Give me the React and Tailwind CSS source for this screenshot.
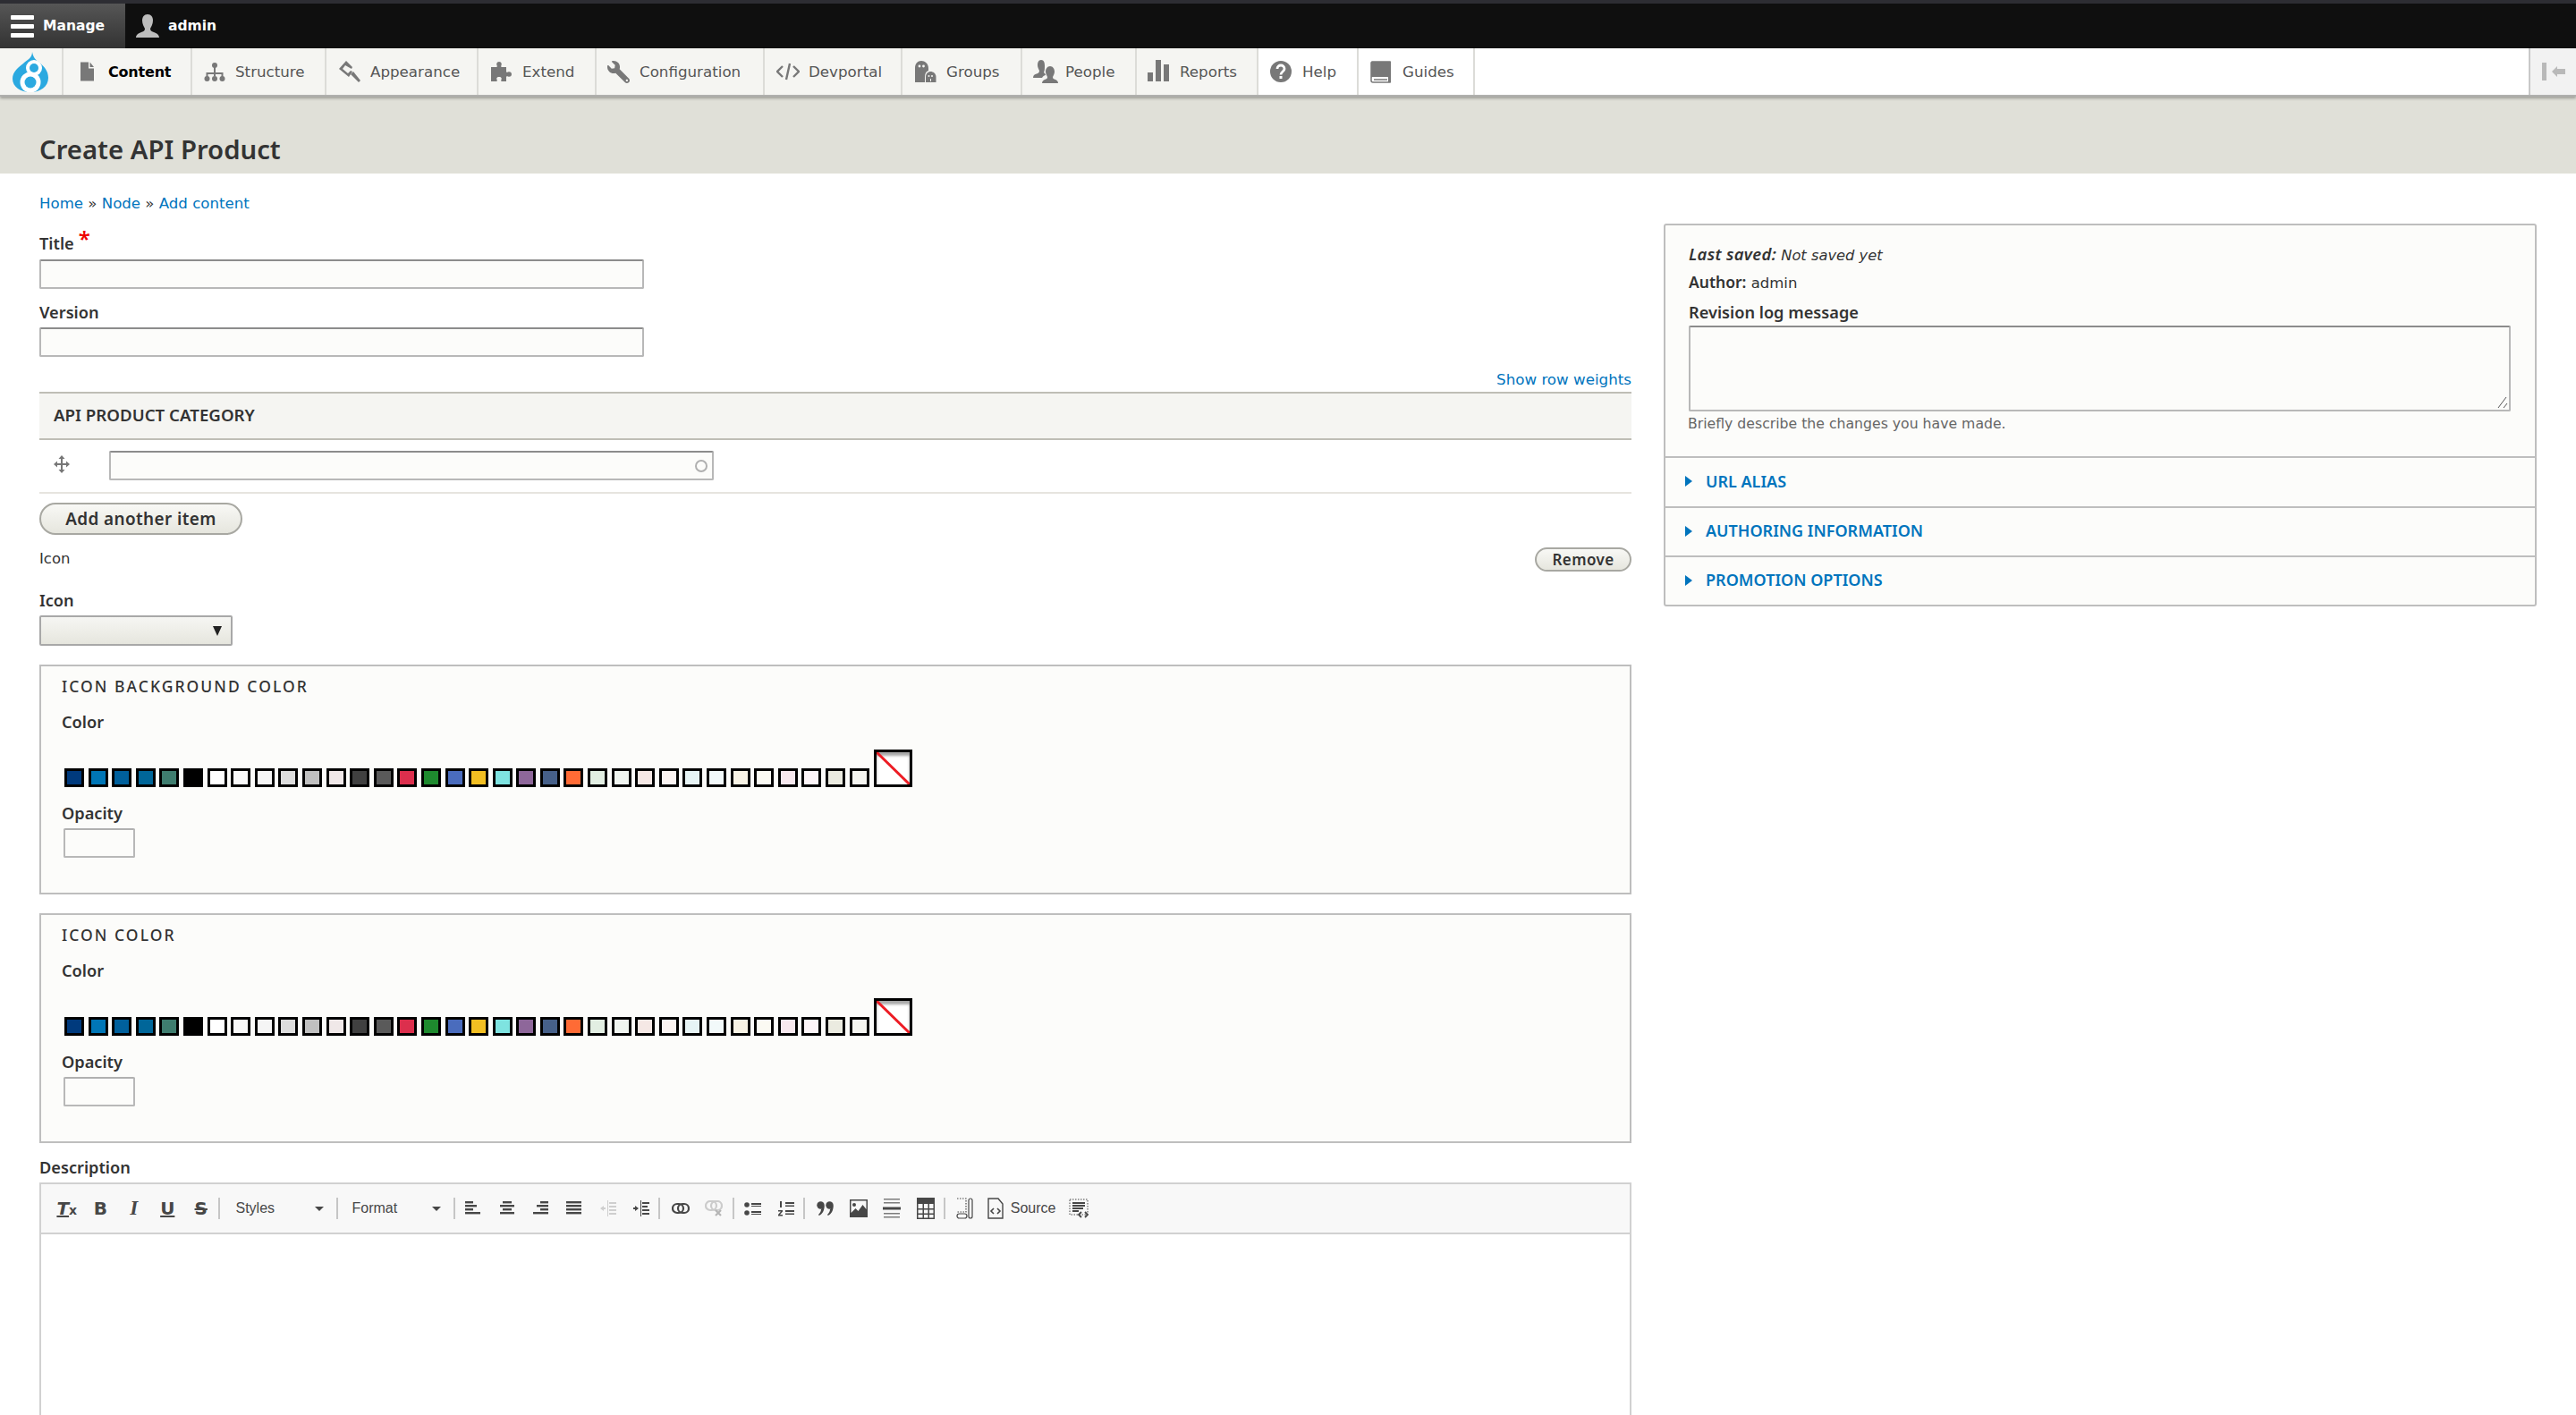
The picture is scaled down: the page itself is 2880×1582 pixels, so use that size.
import { FaWrench } from "react-icons/fa";

const navGrey = "#787878";

const swatches = [
    "#003a7d", "#0076b6", "#00609c", "#006699", "#3f7d6f", "#000000", "#ffffff", "#f9f9f9", "#f5f5f5", "#dcdcdc", "#c0c0c0", "#f0e8e8",
    "#404040", "#5a5a5a", "#dc2f4d", "#1e8a2e", "#4a6cbd", "#f2bf22", "#7ee3e0", "#8e679a", "#466089", "#ff6b35", "#e2eee2", "#f0f5f0",
    "#f5e8e5", "#fbf4f2", "#e7f4f5", "#f2f9fa", "#f8f3e5", "#fbfaf3", "#f7e8ee", "#fdf5f8", "#ebebe0", "#f5f5f0",
];

const FileIcon = () => (
    <svg width="24" height="24" viewBox="0 0 24 24" fill={navGrey}>
        <path d="M5 1.5h9v7h6v14H5z" />
        <path d="M15.500 1.500l4.500 5.500h-4.500z" />
    </svg>
);

const StructureIcon = () => (
    <svg width="26" height="26" viewBox="0 0 26 26" fill={navGrey} stroke={navGrey}>
        <circle cx="13" cy="6" r="3" stroke="none" />
        <path d="M13 8v10M4.500 20v-5h17v5" strokeWidth="2" fill="none" />
        <circle cx="4.500" cy="21" r="3" stroke="none" />
        <circle cx="13" cy="21" r="3" stroke="none" />
        <circle cx="21.500" cy="21" r="3" stroke="none" />
    </svg>
);

const AppearanceIcon = () => (
    <svg width="26" height="26" viewBox="0 0 26 26" fill={navGrey}>
        <path d="M9 1l7 7-1 2-7-4-3 4 6 5 3-3 2 1-4 6L1 10z" />
        <path d="M14 16l3-3 8 10-2 2z" />
    </svg>
);

const ExtendIcon = () => (
    <svg width="26" height="26" viewBox="0 0 26 26" fill={navGrey}>
        <path d="M1 8h6c1 0 1-1 .5-2S7 2 10 2s3 3 2.500 4-.5 2 .5 2h5v5c0 1 1 1 2 .5s4-.5 4 2.500-3 3-4 2.500-2-.5-2 .5v5h-5c-1 0-1-1-.5-2s.5-3-2.500-3-3 2-2.500 3 .5 2-.5 2H1z" />
    </svg>
);

const DevIcon = () => (
    <svg width="26" height="26" viewBox="0 0 26 26" fill="none" stroke={navGrey} strokeWidth="2.400">
        <path d="M7 7l-6 6 6 6M19 7l6 6-6 6M15 4l-4 18" />
    </svg>
);

const GroupsIcon = () => (
    <svg width="26" height="26" viewBox="0 0 26 26" fill={navGrey}>
        <path d="M1 25V9C1 4 4 1 8 1s8 3 8 8v3c-3 1-4 4-4 7v6z" />
        <path d="M13 25v-6c0-4 3-6 5.500-6s6 2 6 6v6z" />
        <circle cx="6" cy="7" r="1.400" fill="#f5f5f2" />
        <circle cx="10.500" cy="7" r="1.400" fill="#f5f5f2" />
        <circle cx="16.500" cy="18" r="1" fill="#f5f5f2" />
        <circle cx="20" cy="18" r="1" fill="#f5f5f2" />
        <rect x="18" y="21" width="1" height="3" fill="#f5f5f2" />
    </svg>
);

const PeopleIcon = () => (
    <svg width="28" height="28" viewBox="0 0 28 28" fill={navGrey}>
        <path d="M9 1c-3 0-4 3-4 6 0 2 1 4 2 6 0 2-1 3-3 3.500S0 18 0 21h10c1-2 3-3 4-3 0-1-1-2-2-3 1-2 1-5 1-8s-1-6-4-6z" />
        <path d="M19 8c-3 0-5 3-5 6 0 2 1 4 2 6 0 2-1 2-3 3s-3 2-3 4h18c0-2-1-3-3-4s-3-1-3-3c1-2 2-4 2-6 0-3-2-6-5-6z" />
    </svg>
);

const ReportsIcon = () => (
    <svg width="26" height="26" viewBox="0 0 26 26" fill={navGrey}>
        <rect x="0" y="14" width="6" height="10" />
        <rect x="9" y="0" width="6" height="24" />
        <rect x="18" y="5" width="6" height="19" />
    </svg>
);

const HelpIcon = () => (
    <svg width="24" height="24" viewBox="0 0 24 24">
        <circle cx="12" cy="12" r="12" fill={navGrey} />
        <path d="M8 9c0-2.500 2-4 4-4s4 1.500 4 4c0 3-4 3-4 6.500" fill="none" stroke="#ffffff" strokeWidth="2.800" />
        <rect x="10.500" y="17" width="3" height="3" fill="#ffffff" />
    </svg>
);

const BookIcon = () => (
    <svg width="24" height="26" viewBox="0 0 24 26">
        <path d="M2 2h20v23H3c-1 0-2-1-2-2V3z" fill="none" stroke={navGrey} strokeWidth="1.500" />
        <path d="M1 2h21v17H3c-1 0-2 .5-2 1z" fill={navGrey} />
        <rect x="20" y="2" width="3" height="23" fill={navGrey} />
        <path d="M4 22h15" stroke={navGrey} strokeWidth="1.500" />
    </svg>
);

const navItems = [
    { label: "Content", width: 144, icon: <FileIcon />, active: true, pad: 14 },
    { label: "Structure", width: 150, icon: <StructureIcon />, pad: 12 },
    { label: "Appearance", width: 170, icon: <AppearanceIcon />, pad: 13 },
    { label: "Extend", width: 132, icon: <ExtendIcon />, pad: 13 },
    { label: "Configuration", width: 188, icon: <FaWrench size={25} color={navGrey} className="-scale-x-100" />, pad: 12 },
    { label: "Devportal", width: 154, icon: <DevIcon />, pad: 13 },
    { label: "Groups", width: 134, icon: <GroupsIcon />, pad: 13 },
    { label: "People", width: 128, icon: <PeopleIcon />, pad: 12 },
    { label: "Reports", width: 136, icon: <ReportsIcon />, pad: 12 },
    { label: "Help", width: 112, icon: <HelpIcon />, pad: 13, white: true },
    { label: "Guides", width: 130, icon: <BookIcon />, pad: 13, white: true },
];

const Toolbar = () => (
    <div className="bg-[#0f0f0f] border-t-4 border-[#2d2d33] h-[54px] flex">
        <div className="w-[140px] h-full bg-gradient-to-b from-[#565656] to-[#333333] flex items-center pl-3 gap-2.5">
            <div className="flex flex-col gap-[5px]">
                <div className="w-[26px] h-[5px] bg-white rounded-[1px]" />
                <div className="w-[26px] h-[5px] bg-white rounded-[1px]" />
                <div className="w-[26px] h-[5px] bg-white rounded-[1px]" />
            </div>
            <span className="text-white font-bold text-[15.500px] mt-[2px]">Manage</span>
        </div>
        <div className="flex items-center pl-3 gap-2.5">
            <svg width="26" height="26" viewBox="0 0 26 26" fill="#bdbdbd">
                <path d="M13 0c-4 0-6 3-6 7 0 4 2 7 3 9 0 2-1 3-4 4-3 1-6 3-6 6h26c0-3-3-5-6-6-3-1-4-2-4-4 1-2 3-5 3-9 0-4-2-7-6-7z" />
            </svg>
            <span className="text-white font-bold text-[15.500px] mt-[2px]">admin</span>
        </div>
    </div>
);

const AdminNav = () => (
    <div className="relative z-10 h-[54px] flex bg-white border-b-2 border-[#b0b0ae] shadow-[0_2px_3px_rgba(0,0,0,0.3)]">
        <div className="w-[71px] bg-[#f5f5f2] border-r-2 border-[#dcdcd8] flex items-center pl-3.5">
            <svg width="40" height="45" viewBox="0 0 40 45">
                <path d="M22 0c0 7-6 9-10 13C7 17 0 22 0 30c0 9 9 15 20 15s20-6 20-16c0-8-5-13-10-17C26 9 23 6 22 0z" fill="#2ba9e0" />
                <circle cx="20" cy="34" r="11.500" fill="#ffffff" />
                <circle cx="24" cy="18" r="9" fill="#ffffff" />
                <circle cx="20" cy="34" r="6.500" fill="#2ba9e0" />
                <circle cx="24" cy="18" r="5" fill="#2ba9e0" />
            </svg>
        </div>
        {navItems.map((item) => (
            <div
                key={item.label}
                style={{ width: item.width, paddingLeft: item.pad }}
                className={`border-r-2 border-[#dcdcd8] flex items-center ${item.white ? "bg-white" : "bg-[#f5f5f2]"}`}
            >
                <div className="w-[36px] shrink-0 flex items-center">{item.icon}</div>
                {item.active ? (
                    <span className="font-bold text-black text-[16px] tracking-[-0.2px] mt-[1px]">{item.label}</span>
                ) : (
                    <span className="text-[#565656] text-[16.700px] mt-[1px]">{item.label}</span>
                )}
            </div>
        ))}
        <div className="flex-1" />
        <div className="w-[53px] bg-[#f2f2f2] border-l-2 border-[#c8c8c8] flex items-center pl-[13px] gap-[6px]">
            <div className="w-[5px] h-[20px] bg-[#b9b9b9]" />
            <svg width="15" height="12" viewBox="0 0 15 12" fill="#b9b9b9">
                <path d="M0 6l6-6v3h9v6H6v3z" />
            </svg>
        </div>
    </div>
);

const Label = ({ children, className = "" }) => (
    <div className={`h-[24px] leading-[23px] font-['Noto_Sans',sans-serif] font-semibold text-[18.200px] text-[#333333] ${className}`}>
        {children}
    </div>
);

const inputCls = "block h-[33px] bg-[#fcfcfa] border-2 border-[#b8b8b8] border-t-[#8c8c8c] rounded-[2px] outline-none";

const ColorField = ({ title, className = "" }) => (
    <div className={`h-[257px] bg-[#fcfcfa] border-2 border-[#bebebe] pl-[23px] pt-[10px] ${className}`}>
        <div className="h-[24px] leading-[24px] font-['Noto_Sans',sans-serif] font-medium text-[17.500px] tracking-[2.050px] text-[#333333] uppercase">
            {title}
        </div>
        <Label className="mt-[17px]">Color</Label>
        <div className="mt-[18px] ml-[3px] h-[42px] flex items-end">
            {swatches.map((c, i) => (
                <div key={i} style={{ backgroundColor: c }} className="w-[22px] h-[21px] mr-[4.600px] border-[3px] border-black" />
            ))}
            <div className="ml-[1px] w-[43px] h-[42px] border-[3px] border-black bg-white shadow-[inset_0_4px_3px_rgba(0,0,0,0.35)]">
                <svg width="37" height="36" viewBox="0 0 37 36">
                    <line x1="0" y1="0" x2="37" y2="36" stroke="#ed1c24" strokeWidth="3" />
                </svg>
            </div>
        </div>
        <Label className="mt-[18px]">Opacity</Label>
        <input className={`${inputCls} mt-[4px] ml-[2px] w-[80px] !border-t-[#b0b0b0]`} />
    </div>
);

const Bars = ({ rows }) => (
    <svg width="20" height="20" viewBox="0 0 20 20" fill="#474747">
        {rows.map((r, i) => (
            <rect key={i} x={r[0]} y={2 + i * 4} width={r[1]} height="2.400" />
        ))}
    </svg>
);

const Glyph = ({ className = "", children }) => (
    <span className={`font-bold text-[20px] text-[#474747] ${className}`}>{children}</span>
);

const Btn = ({ children, w = 37.4 }) => (
    <div style={{ width: w }} className="h-[36px] flex items-center justify-center shrink-0">
        {children}
    </div>
);

const Sep = () => <div className="w-[2px] h-[24px] bg-[#c6c6c6] shrink-0" />;

const Combo = ({ label, width, pad }) => (
    <div style={{ width, paddingLeft: pad }} className="h-[36px] flex items-center justify-between pr-[14px] shrink-0 font-['Liberation_Sans',sans-serif] text-[16px] text-[#474747]">
        <span>{label}</span>
        <svg width="10" height="5" viewBox="0 0 10 5" fill="#474747">
            <path d="M0 0h10L5 5z" />
        </svg>
    </div>
);

const EditorToolbar = () => (
    <div className="h-[56px] bg-[#f8f8f8] border-b-2 border-[#d1d1d1] flex items-center pl-[10px]">
        <Btn w={37.5}>
            <span className="font-bold italic text-[20px] text-[#474747] underline leading-none">T</span>
            <span className="text-[14px] font-bold text-[#474747] self-end mb-[5px]">x</span>
        </Btn>
        <Btn w={37.5}><Glyph>B</Glyph></Btn>
        <Btn w={37.5}><Glyph className="italic font-['Liberation_Serif',serif] !text-[23px]">I</Glyph></Btn>
        <Btn w={37.5}><Glyph className="underline">U</Glyph></Btn>
        <Btn w={37.5}><Glyph className="line-through">S</Glyph></Btn>
        <Sep />
        <Combo label="Styles" width={130} pad={18} />
        <Sep />
        <Combo label="Format" width={129} pad={16} />
        <Sep />
        <div className="w-[3px]" />
        <Btn><Bars rows={[[0, 9], [0, 13], [0, 9], [0, 17]]} /></Btn>
        <Btn><Bars rows={[[4, 10], [1, 16], [4, 10], [1, 16]]} /></Btn>
        <Btn><Bars rows={[[9, 9], [5, 13], [9, 9], [1, 17]]} /></Btn>
        <Btn><Bars rows={[[1, 17], [1, 17], [1, 17], [1, 17]]} /></Btn>
        <Btn>
            <svg width="20" height="20" viewBox="0 0 20 20" fill="#cfcfcf">
                <path d="M1 10l4-3v2h2v2H5v2z" />
                <rect x="9" y="1" width="1" height="18" />
                <rect x="11" y="3" width="8" height="2" /><rect x="11" y="7" width="8" height="2" />
                <rect x="11" y="11" width="8" height="2" /><rect x="11" y="15" width="8" height="2" />
            </svg>
        </Btn>
        <Btn>
            <svg width="20" height="20" viewBox="0 0 20 20" fill="#474747">
                <path d="M7 10l-4-3v2H1v2h2v2z" />
                <rect x="9" y="1" width="1" height="18" />
                <rect x="11" y="3" width="8" height="2" /><rect x="11" y="7" width="6" height="2" />
                <rect x="11" y="11" width="8" height="2" /><rect x="11" y="15" width="8" height="2" />
            </svg>
        </Btn>
        <Sep />
        <div className="w-[5px]" />
        <Btn w={37}>
            <svg width="20" height="14" viewBox="0 0 20 14" fill="none" stroke="#474747" strokeWidth="2.200">
                <rect x="1" y="2" width="12" height="10" rx="5" />
                <rect x="7" y="2" width="12" height="10" rx="5" />
            </svg>
        </Btn>
        <Btn w={37}>
            <svg width="20" height="18" viewBox="0 0 20 18" fill="none" stroke="#cccccc" strokeWidth="2.200">
                <rect x="1" y="1" width="12" height="10" rx="5" />
                <rect x="7" y="1" width="12" height="10" rx="5" />
                <path d="M12 11l6 6M18 11l-6 6" stroke="#b5b5b5" />
            </svg>
        </Btn>
        <div className="w-[2px]" />
        <Sep />
        <div className="w-[3px]" />
        <Btn w={37}>
            <svg width="20" height="20" viewBox="0 0 20 20" fill="#474747">
                <circle cx="3" cy="6" r="2.800" /><circle cx="3" cy="15" r="2.800" />
                <rect x="8" y="4" width="11" height="2" /><rect x="8" y="7" width="11" height="1" />
                <rect x="8" y="13" width="11" height="2" /><rect x="8" y="16" width="11" height="1" />
            </svg>
        </Btn>
        <Btn w={37}>
            <svg width="20" height="20" viewBox="0 0 20 20" fill="#474747">
                <rect x="3" y="2" width="2" height="7" />
                <path d="M1 12h5v1.500L3 17h3v1.500H1V17l3-3.500H1z" />
                <rect x="9" y="3" width="10" height="2" /><rect x="9" y="6.500" width="10" height="1.500" />
                <rect x="9" y="12" width="10" height="2" /><rect x="9" y="15.500" width="10" height="1.500" />
            </svg>
        </Btn>
        <Sep />
        <div className="w-[4px]" />
        <Btn>
            <svg width="20" height="20" viewBox="0 0 20 20" fill="#474747">
                <circle cx="4.500" cy="6.500" r="4.200" /><path d="M8.700 7c0 5-2 9-6 11l-.7-1c2-2 3-4 3-6z" />
                <circle cx="14.500" cy="6.500" r="4.200" /><path d="M18.700 7c0 5-2 9-6 11l-.7-1c2-2 3-4 3-6z" />
            </svg>
        </Btn>
        <Btn>
            <svg width="20" height="20" viewBox="0 0 20 20" fill="#474747">
                <path d="M0 0h20v20H0zM1.500 1.500v13.500l5-5 3 3 5-7 4 5V1.500z" fillRule="evenodd" />
                <circle cx="5" cy="6" r="2" />
            </svg>
        </Btn>
        <Btn>
            <svg width="20" height="24" viewBox="0 0 20 24" fill="#474747">
                <rect x="1" y="1" width="18" height="1.500" opacity="0.7" /><rect x="1" y="5" width="18" height="1.500" opacity="0.7" />
                <rect x="0" y="10.500" width="20" height="3" />
                <rect x="1" y="17" width="18" height="1.500" opacity="0.7" /><rect x="1" y="21" width="18" height="1.500" opacity="0.7" />
            </svg>
        </Btn>
        <Btn>
            <svg width="20" height="24" viewBox="0 0 20 24" fill="#474747">
                <path d="M0 0h20v24H0zM1.500 7v5h5V7zM8 7v5h4.500V7zM14 7v5h4.500V7zM1.500 13.500v4h5v-4zM8 13.500v4h4.500v-4zM14 13.500v4h4.500v-4zM1.500 19v3.500h5V19zM8 19v3.500h4.500V19zM14 19v3.500h4.500V19z" fillRule="evenodd" />
            </svg>
        </Btn>
        <div className="w-[2px]" />
        <Sep />
        <div className="w-[3px]" />
        <Btn>
            <svg width="20" height="24" viewBox="0 0 20 24" fill="none" stroke="#474747" strokeWidth="1.200">
                <path d="M1 1h10v15H1" strokeDasharray="1.500 1.500" />
                <rect x="14" y="1" width="4" height="22" rx="2" />
                <rect x="1" y="18" width="11" height="5" rx="2.500" />
            </svg>
        </Btn>
        <div className="w-[6px]" />
        <svg width="18" height="24" viewBox="0 0 18 24" fill="none" stroke="#474747" strokeWidth="1.400" className="shrink-0">
            <path d="M1 1h11l5 6v16H1z" />
            <path d="M7 12l-3 3 3 3M11 12l3 3-3 3" strokeWidth="1.600" />
        </svg>
        <span className="ml-[8px] mr-[7px] font-['Liberation_Sans',sans-serif] text-[16px] text-[#474747]">Source</span>
        <Btn>
            <svg width="22" height="22" viewBox="0 0 22 22" fill="none" stroke="#474747">
                <rect x="1" y="1" width="20" height="17" strokeDasharray="1.500 1.500" />
                <path d="M4 5h14M4 8h14M4 11h12M4 14h7" strokeWidth="2" />
                <path d="M14 15l-3 3 3 3M18 15l3 3-3 3" strokeWidth="1.800" />
            </svg>
        </Btn>
    </div>
);

const SideRow = ({ label, h }) => (
    <div style={{ height: h }} className="border-t-2 border-[#bebebe] flex items-center pl-[22px] gap-[15px] pb-[2px]">
        <svg width="8" height="12" viewBox="0 0 8 12" fill="#0074bd">
            <path d="M0 0l8 6-8 6z" />
        </svg>
        <span className="font-['Noto_Sans',sans-serif] font-semibold text-[18px] text-[#0074bd] uppercase">{label}</span>
    </div>
);

const Sidebar = () => (
    <aside className="w-[976px] h-[428px] mt-[56px] bg-[#fcfcfa] border-2 border-[#bebebe] rounded-[3px]">
        <div className="pl-[26px] pt-[20px] pb-[24px] h-[258px]">
            <div className="h-[24px] leading-[23px] text-[16.300px] text-[#333333] italic">
                <span className="font-['Noto_Sans',sans-serif] font-semibold text-[18.500px] tracking-[0.3px]">Last saved:</span> Not saved yet
            </div>
            <div className="mt-[8px] h-[24px] leading-[23px] text-[16.500px] text-[#333333]">
                <span className="font-['Noto_Sans',sans-serif] font-semibold text-[17.500px]">Author:</span> admin
            </div>
            <Label className="mt-[10px]">Revision log message</Label>
            <div className="relative mt-[2px] w-[919px]">
                <textarea className={`${inputCls} !h-[96px] w-full resize-none`} />
                <svg width="12" height="14" viewBox="0 0 12 14" fill="none" stroke="#555555" className="absolute right-[3px] bottom-[3px]">
                    <path d="M1 13L10 1M7 13l4-5" />
                </svg>
            </div>
            <div className="mt-[2px] -ml-[1px] h-[24px] leading-[24px] text-[15.700px] text-[#666666]">Briefly describe the changes you have made.</div>
        </div>
        <SideRow label="URL Alias" h={56} />
        <SideRow label="Authoring information" h={55} />
        <SideRow label="Promotion options" h={55} />
    </aside>
);

const MainForm = () => (
    <main className="w-[1780px] pt-[22px] shrink-0">
        <div className="h-[24px] leading-[24px] text-[16.600px] text-[#333333]">
            <span className="text-[#0074bd]">Home</span> » <span className="text-[#0074bd]">Node</span> » <span className="text-[#0074bd]">Add content</span>
        </div>

        <Label className="mt-[21px]">
            Title<span className="ml-[5px] text-[#ee0000] text-[24px] leading-[0] relative -top-[3px]">*</span>
        </Label>
        <input className={`${inputCls} mt-[5px] w-[676px]`} />
        <Label className="mt-[15px]">Version</Label>
        <input className={`${inputCls} mt-[4px] w-[676px]`} />

        <div className="mt-[13px] h-[24px] leading-[24px] text-right text-[16.700px] text-[#0074bd]">Show row weights</div>

        <div className="mt-[2px] h-[54px] bg-[#f5f5f2] border-y-2 border-[#bfbeb6] flex items-center pl-[16px] pb-[2px] font-['Noto_Sans',sans-serif] font-semibold text-[18.700px] text-[#333333] uppercase">
            API Product Category
        </div>
        <div className="h-[60px] border-b-2 border-[#e6e4df] flex items-start pt-[12px]">
            <svg width="18" height="20" viewBox="0 0 18 20" fill="#777777" className="ml-[16px] mt-[5px]">
                <path d="M9 0l3.500 4H10v5h4V6.500L18 10l-4 3.500V11h-4v5h2.500L9 20l-3.500-4H8v-5H4v2.500L0 10l4-3.500V9h4V4H5.500z" />
            </svg>
            <div className="relative ml-[44px]">
                <input className={`${inputCls} w-[676px]`} />
                <div className="absolute right-[7px] top-[10px] w-[14px] h-[14px] rounded-full border-2 border-[#b0b0b0]" />
            </div>
        </div>

        <div className="mt-[10px] w-[227px] h-[36px] rounded-full border-2 border-[#a8a8a2] bg-gradient-to-b from-[#f8f8f5] to-[#e6e6de] flex items-center justify-center font-['Noto_Sans',sans-serif] font-semibold text-[18.900px] tracking-[0.4px] text-[#333333]">
            Add another item
        </div>

        <div className="mt-[14px] h-[27px] flex items-center justify-between">
            <span className="text-[16.500px] text-[#333333]">Icon</span>
            <div className="w-[108px] h-[27px] rounded-full border-2 border-[#a8a8a2] bg-gradient-to-b from-[#f8f8f5] to-[#e6e6de] flex items-center justify-center font-['Noto_Sans',sans-serif] font-semibold text-[17px] tracking-[0.4px] text-[#333333]">
                Remove
            </div>
        </div>

        <Label className="mt-[21px]">Icon</Label>
        <div className="mt-[4px] w-[216px] h-[34px] rounded-[2px] border-2 border-[#a8a8a8] bg-gradient-to-b from-[#f6f6f3] to-[#e6e6de] flex items-center justify-end pr-[10px]">
            <svg width="10" height="11" viewBox="0 0 10 11" fill="#222222">
                <path d="M0 0h10L5 11z" />
            </svg>
        </div>

        <ColorField title="Icon background color" className="mt-[21px]" />
        <ColorField title="Icon color" className="mt-[21px]" />

        <Label className="mt-[16px]">Description</Label>
        <div className="mt-[4px] h-[400px] border-2 border-[#d1d1d1] bg-white">
            <EditorToolbar />
        </div>
    </main>
);

const App = () => {
    return (
        <div className="w-[2880px] h-[1582px] overflow-hidden bg-white font-['DejaVu_Sans',sans-serif]">
            <Toolbar />
            <AdminNav />
            <div className="h-[86px] bg-[#e0e0d8] flex items-end pl-[44px] pb-[7px]">
                <h1 className="leading-[40px] font-['Noto_Sans',sans-serif] font-semibold text-[29.300px] text-[#333333]">Create API Product</h1>
            </div>
            <div className="flex pl-[44px] gap-[36px]">
                <MainForm />
                <Sidebar />
            </div>
        </div>
    );
};

export default App;
